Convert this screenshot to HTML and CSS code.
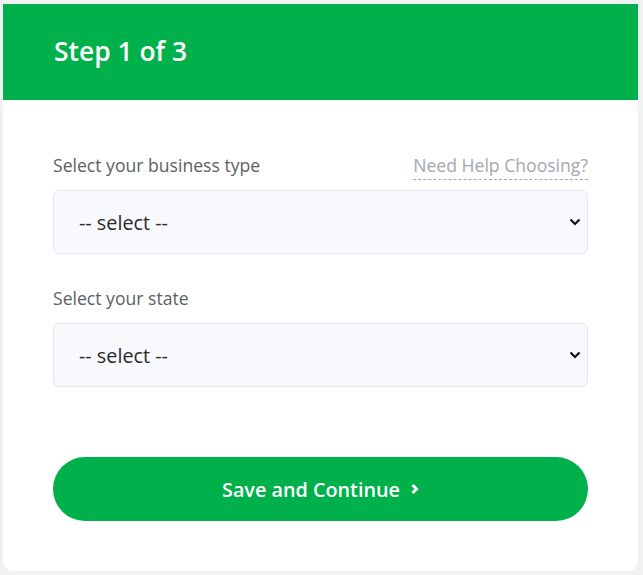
FILE: index.html
```html
<!DOCTYPE html>
<html lang="en">
<head>
    <meta charset="UTF-8">
    <meta name="viewport" content="width=device-width, initial-scale=1.0">
    <title>Step 1 of 3</title>
    <link rel="stylesheet" href="styles.css">
</head>
<body>
    <div class="card">
        <div class="card-header">
            <h2>Step 1 of 3</h2>
        </div>
        <form class="card-body">
            <div class="field">
                <div class="field-top">
                    <label for="businessType">Select your business type</label>
                    <a href="#" class="help-link">Need Help Choosing?</a>
                </div>
                <div class="select-wrap">
                    <select id="businessType">
                        <option value="">-- select --</option>
                    </select>
                    <svg class="chevron" width="12" height="8" viewBox="0 0 12 8"><path d="M1.5 1.5 L6 6 L10.5 1.5" fill="none" stroke="#111" stroke-width="2.2"/></svg>
                </div>
            </div>
            <div class="field">
                <div class="field-top">
                    <label for="state">Select your state</label>
                </div>
                <div class="select-wrap">
                    <select id="state">
                        <option value="">-- select --</option>
                    </select>
                    <svg class="chevron" width="12" height="8" viewBox="0 0 12 8"><path d="M1.5 1.5 L6 6 L10.5 1.5" fill="none" stroke="#111" stroke-width="2.2"/></svg>
                </div>
            </div>
            <button type="button" class="btn-continue">
                Save and Continue
                <svg width="9" height="12" viewBox="0 0 9 12"><path d="M2.5 2 L6.5 6 L2.5 10" fill="none" stroke="#fff" stroke-width="3"/></svg>
            </button>
        </form>
    </div>
</body>
</html>
```

FILE: styles.css
```css
body {
    font-family: 'Open Sans', sans-serif;
    margin: 0;
    padding: 4px 5px 4px 3px;
    background-color: #f0f1f3;
}
.card {
    background: #fff;
    border-radius: 0 0 10px 10px;
    overflow: hidden;
}
.card-header {
    background: #00b04b;
    height: 96px;
    display: flex;
    align-items: center;
    padding: 0 51px;
}
.card-header h2 {
    margin: 0;
    color: #fff;
    font-size: 26.4px;
    font-weight: 600;
    margin-top: -2px;
}
.card-body {
    padding: 52px 50px 50px 50px;
}
.field {
    margin-bottom: 31px;
}
.field-top {
    display: flex;
    justify-content: space-between;
    align-items: baseline;
    height: 26px;
    margin-bottom: 12px;
    line-height: 26px;
}
label {
    font-size: 17.6px;
    color: #5c5f63;
}
.help-link {
    font-size: 17.6px;
    color: #a3a7ae;
    text-decoration: none;
    border-bottom: 1px dashed #a3a7ae;
    line-height: 22px;
    padding-bottom: 3px;
}
.select-wrap {
    position: relative;
}
select {
    appearance: none;
    -webkit-appearance: none;
    width: 100%;
    height: 64px;
    padding: 0 25px;
    font-family: 'Open Sans', sans-serif;
    font-size: 19.8px;
    color: #2a2a2a;
    background: #f8f9fd;
    border: 1px solid #e3e6ee;
    border-radius: 6px;
    outline: none;
}
.chevron {
    position: absolute;
    right: 7px;
    top: 28px;
    pointer-events: none;
}
.btn-continue {
    display: flex;
    align-items: center;
    justify-content: center;
    gap: 10px;
    width: 100%;
    height: 64px;
    margin-top: 70px;
    background: #00b04b;
    color: #fff;
    border: none;
    border-radius: 32px;
    font-family: 'Open Sans', sans-serif;
    font-size: 19.8px;
    font-weight: 600;
    cursor: pointer;
}
```
